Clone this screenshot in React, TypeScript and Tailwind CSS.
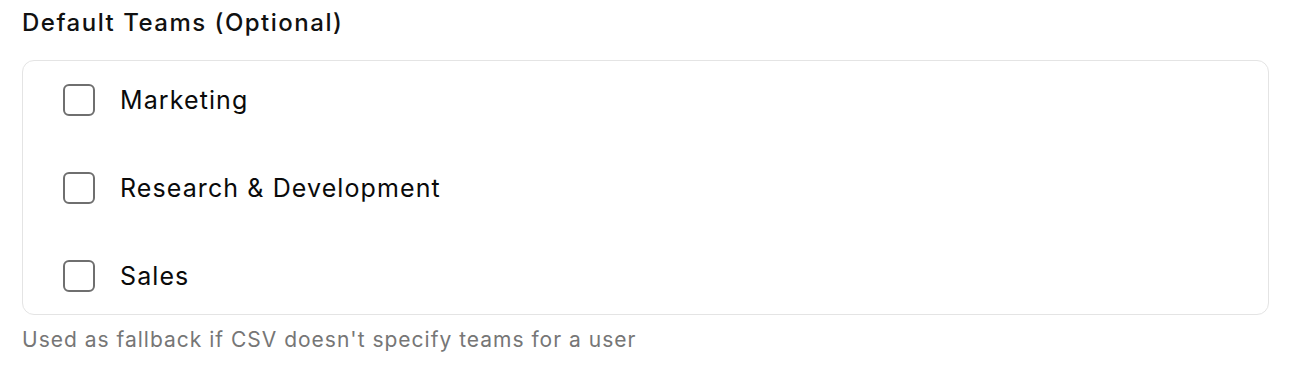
import React from "react";

const teams = ["Marketing", "Research & Development", "Sales"];

export default function App() {
  return (
    <div className="w-[1292px] h-[384px] bg-white px-[22px] pt-[8px]" style={{ fontFamily: "Inter, 'Noto Sans', sans-serif" }}>
      <div className="text-[24px] leading-[30px] font-medium tracking-[1.5px] text-[#111111]">Default Teams (Optional)</div>
      <div className="mt-[22px] w-[1247px] h-[255px] border border-[#e4e4e4] rounded-[12px] py-[22px] flex flex-col">
        {teams.map((t) => (
          <label key={t} className="flex items-center h-[34px] pl-[40px] mb-[54px] last:mb-0">
            <span className="w-[32px] h-[32px] border-2 border-[#6f6f6f] rounded-[6px] bg-white shrink-0" />
            <span className="ml-[25px] text-[25px] leading-[34px] tracking-[1.1px] text-[#0a0a0a]">{t}</span>
          </label>
        ))}
      </div>
      <div className="mt-[10px] text-[21px] leading-[30px] tracking-[1px] text-[#767676]">
        Used as fallback if CSV doesn't specify teams for a user
      </div>
    </div>
  );
}
